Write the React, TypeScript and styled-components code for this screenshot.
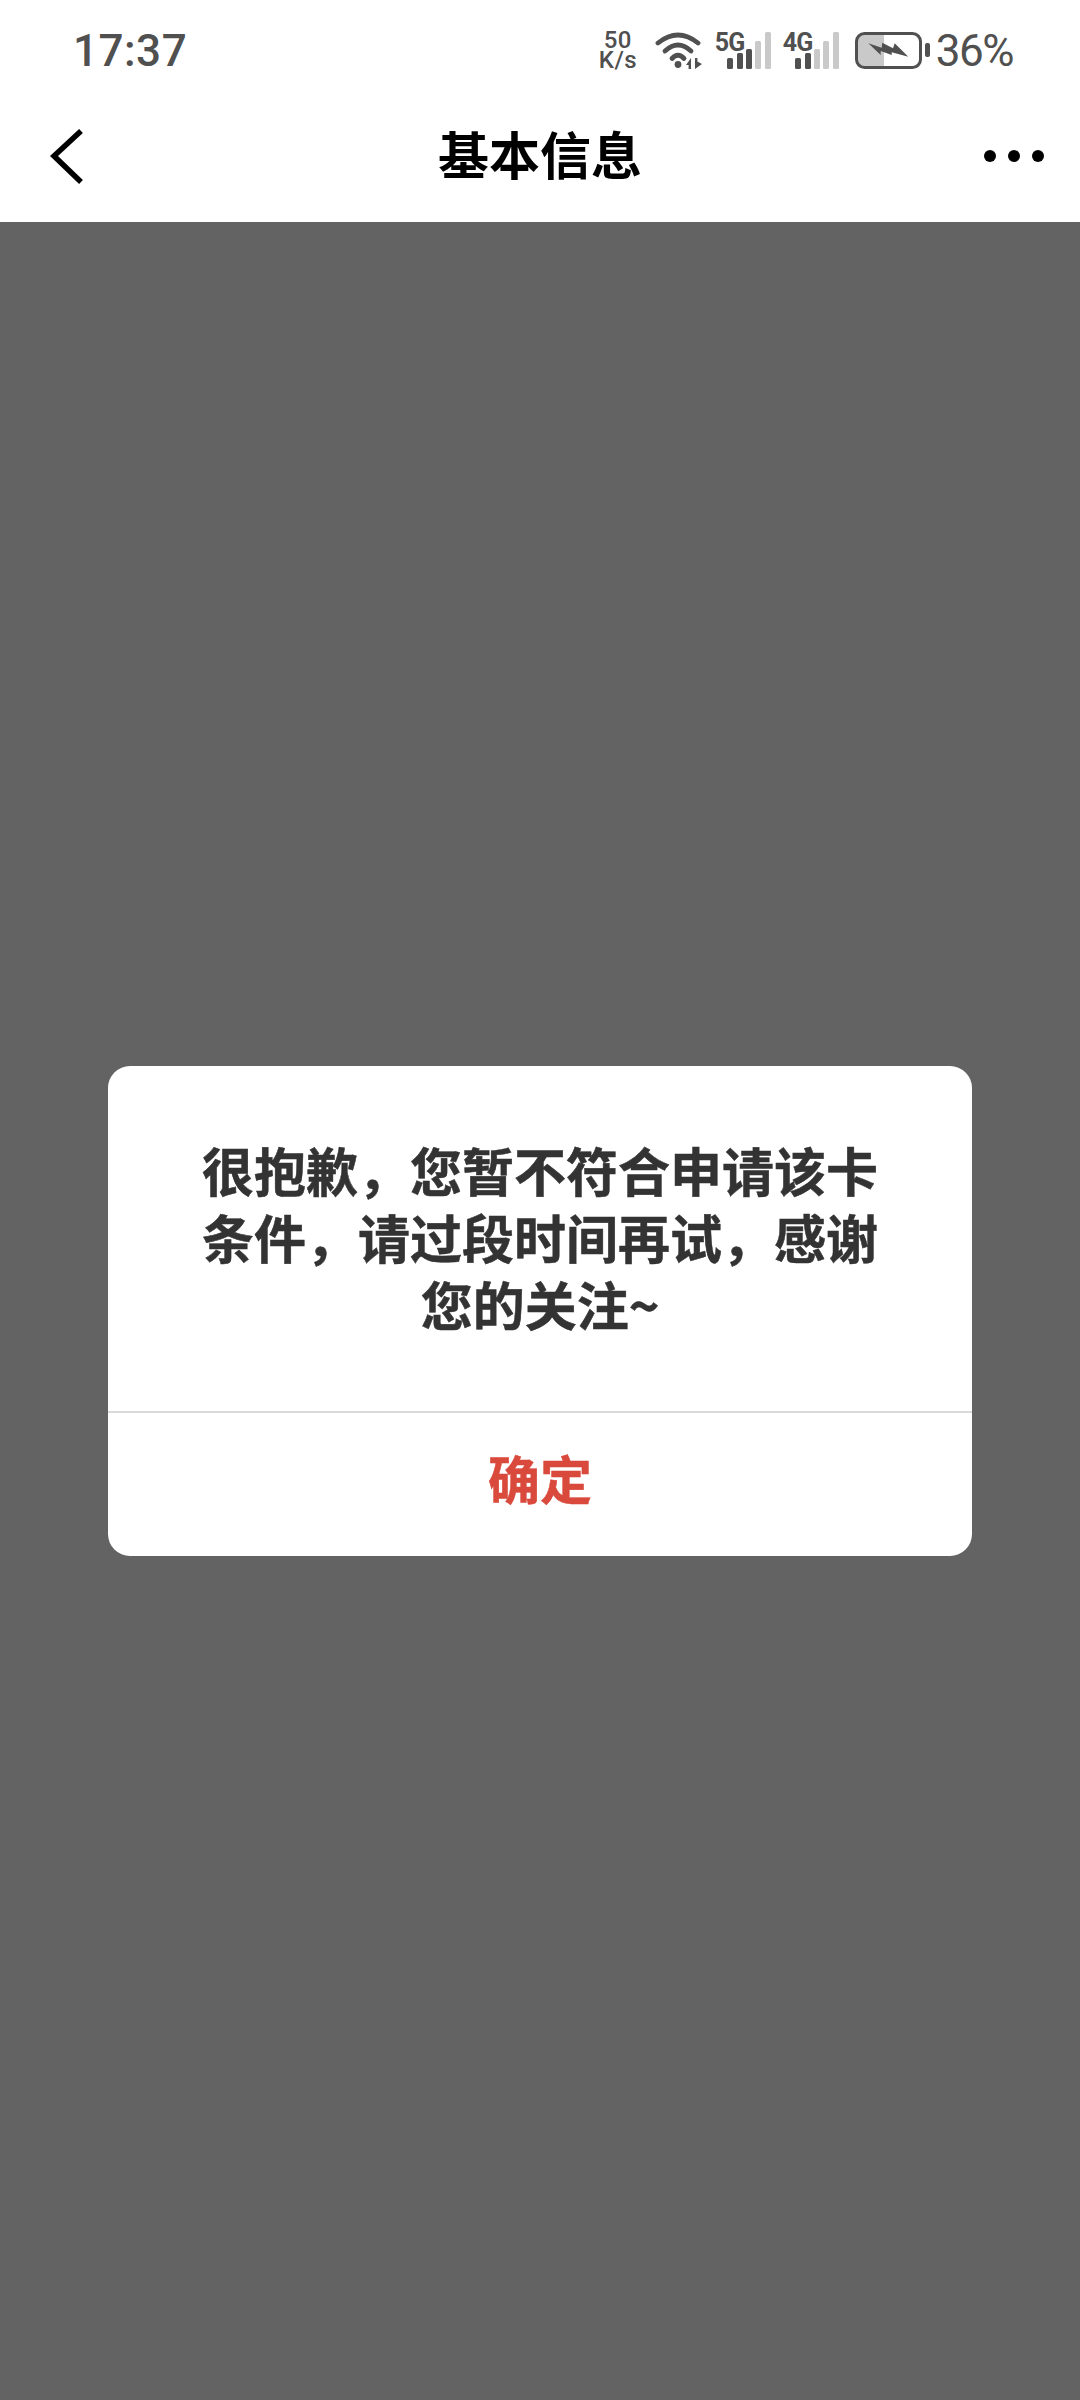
import React from "react";
import styled, { createGlobalStyle } from "styled-components";

const GlobalStyle = createGlobalStyle`
  html, body {
    margin: 0;
    padding: 0;
    background: #636363;
  }
  * {
    box-sizing: border-box;
  }
`;

const SIGNAL_HEIGHTS = [11, 16, 20, 28, 37];

const Signal = ({ label, active }: { label: string; active: number }) => (
  <SignalWrap>
    <SignalLabel>{label}</SignalLabel>
    <Bars>
      {SIGNAL_HEIGHTS.map((height, i) => (
        <Bar key={height} $height={height} $on={i < active} />
      ))}
    </Bars>
  </SignalWrap>
);

const App = () => (
  <Page>
    <GlobalStyle />
    <Header>
      <StatusBar>
        <Time>17:37</Time>
        <StatusIcons>
          <Speed>
            50
            <br />
            K/s
          </Speed>
          <WifiIcon width="48" height="37" viewBox="0 0 48 37" fill="none">
            <g stroke="#505050" strokeWidth="4.8" strokeLinecap="round">
              <path d="M3 11 Q23 -5 43 11" />
              <path d="M10 19 Q23 7 36 19" />
              <path d="M17 26.5 Q23 20 29 26.5" />
            </g>
            <circle cx="23" cy="32.5" r="3.4" fill="#505050" />
            <path d="M31 33 L36 26 V37 H33.6 V33 Z" fill="#505050" />
            <path d="M40 26 H42.4 V29.5 L47 32 L40 37 Z" fill="#505050" />
          </WifiIcon>
          <Signal label="5G" active={3} />
          <Signal label="4G" active={2} />
          <BatteryIcon width="76" height="37" viewBox="0 0 76 37" fill="none">
            <path d="M9 3 H29 V34 H9 A7 7 0 0 1 2 27 V10 A7 7 0 0 1 9 3 Z" fill="#c9c9c9" />
            <rect x="1.5" y="1.5" width="64" height="34" rx="8" stroke="#505050" strokeWidth="3" />
            <path
              d="M13.3 11.3 L26.7 15.7 L27.3 10.7 L38 16.3 L39.7 11.3 L53.3 24.7 L36.7 20.3 L36.7 23 L25.7 19 L25.7 23 Z"
              fill="#505050"
            />
            <rect x="70" y="11" width="5" height="14" rx="2" fill="#505050" />
          </BatteryIcon>
          <Battery>36%</Battery>
        </StatusIcons>
      </StatusBar>
      <NavBar>
        <svg width="52" height="60" viewBox="0 0 52 60" fill="none">
          <path d="M45 5 L18 30 L45 56" stroke="#000" strokeWidth="5.5" />
        </svg>
        <NavTitle>基本信息</NavTitle>
        <Dots>
          <Dot />
          <Dot />
          <Dot />
        </Dots>
      </NavBar>
    </Header>
    <Overlay>
      <Dialog>
        <Message>很抱歉，您暂不符合申请该卡条件，请过段时间再试，感谢您的关注~</Message>
        <Confirm>确定</Confirm>
      </Dialog>
    </Overlay>
  </Page>
);

const Page = styled.div`
  width: 1080px;
  height: 2400px;
  display: flex;
  flex-direction: column;
  overflow: hidden;
  font-family: "Noto Sans CJK SC", "Noto Sans", sans-serif;
`;
const Header = styled.header`
  background: #fff;
  height: 222px;
  display: flex;
  flex-direction: column;
`;
const StatusBar = styled.div`
  height: 90px;
  padding: 10px 67px 0 73px;
  display: flex;
  align-items: center;
  justify-content: space-between;
  color: #505050;
`;
const Time = styled.span`
  margin-top: 2px;
  font-family: Roboto, sans-serif;
  font-size: 44px;
  line-height: 1;
  font-weight: 500;
  letter-spacing: 0.5px;
`;
const StatusIcons = styled.div`
  display: flex;
  align-items: center;
`;
const Speed = styled.div`
  width: 38px;
  margin-right: 18px;
  font-family: Roboto, sans-serif;
  font-size: 24px;
  line-height: 20px;
  font-weight: 500;
  letter-spacing: 0.5px;
  text-align: center;
  white-space: nowrap;
`;
const WifiIcon = styled.svg`
  display: block;
`;
const SignalWrap = styled.div`
  position: relative;
  width: 56px;
  height: 37px;
  margin-left: 12px;
`;
const SignalLabel = styled.span`
  position: absolute;
  left: 0;
  top: -2px;
  font-family: Roboto, sans-serif;
  font-size: 25px;
  line-height: 25px;
  font-weight: 700;
  letter-spacing: -1px;
`;
const Bars = styled.div`
  position: absolute;
  right: 0;
  bottom: 0;
  display: flex;
  align-items: flex-end;
  gap: 3.4px;
`;
const Bar = styled.i<{ $height: number; $on: boolean }>`
  display: block;
  width: 6px;
  height: ${({ $height }) => $height}px;
  border-radius: 1.5px;
  background: ${({ $on }) => ($on ? "#505050" : "#c9c9c9")};
`;
const BatteryIcon = styled.svg`
  display: block;
  margin-left: 16px;
`;
const Battery = styled.span`
  margin: 2px 0 0 5px;
  font-family: Roboto, sans-serif;
  font-size: 44px;
  line-height: 1;
  letter-spacing: -1.5px;
`;
const NavBar = styled.nav`
  height: 132px;
  padding: 0 36px;
  display: grid;
  grid-template-columns: 1fr auto 1fr;
  align-items: center;
`;
const NavTitle = styled.h1`
  margin: 0 0 6px;
  font-size: 51px;
  line-height: 1;
  font-weight: 700;
  color: #000;
`;
const Dots = styled.div`
  justify-self: end;
  display: flex;
  gap: 12px;
`;
const Dot = styled.i`
  display: block;
  width: 12px;
  height: 12px;
  border-radius: 50%;
  background: #000;
`;
const Overlay = styled.main`
  flex: 1;
  background: #636363;
  display: flex;
  align-items: center;
  justify-content: center;
`;
const Dialog = styled.section`
  width: 864px;
  background: #fff;
  border-radius: 22px;
  display: flex;
  flex-direction: column;
`;
const Message = styled.p`
  margin: 0;
  padding: 70px 94px 74px;
  border-bottom: 2px solid #d9d9d9;
  font-size: 52px;
  line-height: 67px;
  font-weight: 700;
  color: #333;
  text-align: center;
  -webkit-text-stroke: 0.5px #333;
`;
const Confirm = styled.button`
  height: 143px;
  padding: 0 0 14px;
  border: 0;
  background: none;
  font-family: inherit;
  font-size: 52px;
  font-weight: 700;
  color: #d9493c;
  -webkit-text-stroke: 0.5px #d9493c;
`;

export default App;
